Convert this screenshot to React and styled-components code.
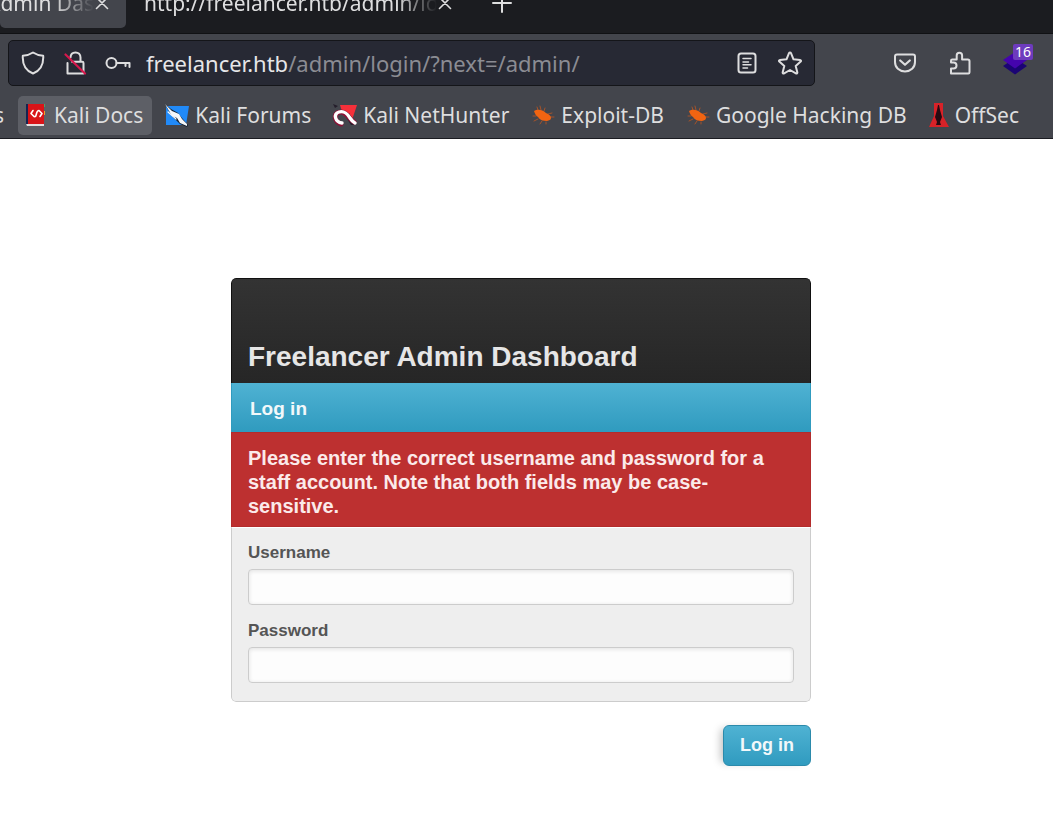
import React from "react";
import styled, { createGlobalStyle } from "styled-components";

const GlobalStyle = createGlobalStyle`
  *, *::before, *::after { box-sizing: border-box; }
  body {
    margin: 0;
    background: #fff;
    font-family: "Liberation Sans", Arial, sans-serif;
  }
  button, input { font-family: inherit; }
`;

const Browser = styled.header`
  font-family: "Noto Sans", sans-serif;
  color: #dededf;
  background: #43454c;
  border-bottom: 1px solid #1b1c22;
  overflow: hidden;
`;

const TabStrip = styled.nav`
  display: flex;
  align-items: flex-end;
  height: 34px;
  overflow: hidden;
  background: #1b1c20;
  border-bottom: 1px solid #101114;
`;

const Tab = styled.div`
  flex: none;
  display: flex;
  align-items: center;
  justify-content: flex-end;
  gap: 1px;
  width: ${(p) => p.$width}px;
  height: 50px;
  margin-bottom: 5px;
  padding-right: ${(p) => (p.$active ? 17 : 0)}px;
  border-radius: 5px;
  background: ${(p) => (p.$active ? "#43454c" : "transparent")};
`;

const TabLabel = styled.span`
  display: flex;
  justify-content: ${(p) => (p.$end ? "flex-end" : "flex-start")};
  width: ${(p) => p.$width}px;
  overflow: hidden;
  white-space: nowrap;
  font-size: 21px;
  line-height: 30px;
  mask-image: linear-gradient(to left, transparent 0, #000 40px);
`;

const IconButton = styled.button`
  display: flex;
  flex: none;
  align-items: center;
  justify-content: center;
  padding: 0;
  border: 0;
  color: inherit;
  background: none;
`;

const NewTab = styled(IconButton)`
  width: 20px;
  height: 50px;
  margin: 0 0 5px 40px;
`;

const Toolbar = styled.div`
  display: flex;
  align-items: center;
  padding: 6px 26px 3px 8px;
`;

const AddressBar = styled.div`
  flex: 1;
  display: flex;
  align-items: center;
  height: 46px;
  padding: 0 12px;
  background: #272934;
  border: 1px solid #141519;
  border-radius: 5px;
`;

const SiteIcons = styled.div`
  display: flex;
  gap: 18px;
  margin-right: 15px;
`;

const PageIcons = styled.div`
  display: flex;
  gap: 21px;
`;

const Address = styled.div`
  flex: 1;
  display: flex;
  min-width: 0;
  font-size: 22px;
  line-height: 30px;
  white-space: nowrap;
  color: #8b8c93;
`;

const Host = styled.span`
  color: #e6e6e8;
`;

const ToolbarActions = styled.div`
  display: flex;
  align-items: center;
  gap: 31px;
  margin-left: 78px;
`;

const Extension = styled(IconButton)`
  position: relative;
`;

const Badge = styled.span`
  position: absolute;
  top: -7px;
  right: -6px;
  padding: 0 2px;
  border-radius: 2px;
  background: #6d3bbd;
  color: #fff;
  font-size: 14px;
  line-height: 16px;
`;

const Bookmarks = styled.nav`
  display: flex;
  align-items: center;
  height: 49px;
  padding-top: 3px;
`;

const CutBookmark = styled.a`
  flex: none;
  display: flex;
  justify-content: flex-end;
  width: 4px;
  margin-right: 14px;
  overflow: hidden;
  color: inherit;
  font-size: 21px;
  line-height: 38px;
  text-decoration: none;
`;

const Bookmark = styled.a`
  flex: none;
  display: flex;
  align-items: center;
  gap: 5px;
  height: 39px;
  padding: 0 9px 0 7px;
  margin-right: 5px;
  border-radius: 5px;
  background: ${(p) => (p.$active ? "#5d5f66" : "transparent")};
  color: inherit;
  font-size: 21px;
  line-height: 30px;
  text-decoration: none;
  white-space: nowrap;
`;

const Page = styled.main`
  display: flex;
  justify-content: center;
  padding: 139px 11px 60px 0;
`;

const LoginForm = styled.form`
  width: 580px;
  max-width: 100%;
`;

const Card = styled.section`
  border-radius: 5px;
  overflow: hidden;
`;

const Title = styled.h1`
  margin: 0;
  padding: 61px 16px 9px;
  border: 1px solid #111;
  border-bottom: 0;
  border-radius: 5px 5px 0 0;
  background: linear-gradient(#333, #262626);
  color: #e6e6e6;
  font-size: 28px;
  line-height: 34px;
`;

const Heading = styled.h2`
  margin: 0;
  padding: 14px 18px 10px;
  border: 1px solid #309bbf;
  border-top: 0;
  background: linear-gradient(#4fb2d3, #309bbf);
  color: #f2f8fa;
  font-size: 19px;
  line-height: 24px;
`;

const ErrorNote = styled.p`
  margin: 0;
  padding: 13px 34px 8px 16px;
  border: 1px solid #b32c2c;
  background: #bd3030;
  color: #fbeaea;
  font-size: 20px;
  font-weight: bold;
  line-height: 24px;
`;

const Fields = styled.div`
  display: grid;
  gap: 14px;
  padding: 13px 16px 18px;
  border: 1px solid #ccc;
  border-top-color: #fff;
  border-radius: 0 0 5px 5px;
  background: #eee;
`;

const Field = styled.div`
  display: grid;
  gap: 4px;
`;

const Label = styled.label`
  color: #555;
  font-size: 17px;
  font-weight: bold;
  line-height: 24px;
`;

const Input = styled.input`
  width: 100%;
  height: 36px;
  padding: 0 8px;
  border: 1px solid #ccc;
  border-radius: 4px;
  background: #fdfdfd;
  box-shadow: inset 0 1px 4px #e0e0e0;
  font-size: 16px;
`;

const Actions = styled.div`
  display: flex;
  justify-content: flex-end;
  padding-top: 23px;
`;

const Submit = styled.button`
  height: 41px;
  padding: 0 16px;
  border: 1px solid #2b8aab;
  border-radius: 6px;
  background: linear-gradient(#4fb2d3, #309bbf);
  box-shadow: -6px 0 8px -4px #bbb;
  color: #f2f8fa;
  font-size: 18px;
  font-weight: bold;
`;

const Svg = ({ w = 24, h = 24, children, ...rest }) => (
  <svg
    width={w}
    height={h}
    viewBox={`0 0 ${w} ${h}`}
    fill="none"
    stroke="currentColor"
    strokeWidth="2"
    strokeLinecap="round"
    strokeLinejoin="round"
    aria-hidden="true"
    {...rest}
  >
    {children}
  </svg>
);

const CloseIcon = () => (
  <Svg w={14} h={14} strokeWidth="1.6"><path d="M1.5 1.5l11 11M12.500 1.500l-11 11" /></Svg>
);
const PlusIcon = () => (
  <Svg w={20} h={20}><path d="M10 1v18M1 10h18" /></Svg>
);
const ShieldIcon = () => (
  <Svg><path d="M12 1.500C9 3.500 5.500 4.600 1.800 4.700c-.5 8.300 2 14.800 10.200 17.800 8.200-3 10.700-9.500 10.200-17.800C18.500 4.600 15 3.500 12 1.500z" /></Svg>
);
const LockIcon = () => (
  <Svg>
    <path d="M4.500 12v10.500h16V12c0-.8-.5-1.300-1.300-1.300H9M7.500 6.500C7.600 3.500 9.600 1.400 12.500 1.400s5 2.100 5 5v4" />
    <path d="M2.500 3.500l19.500 19" stroke="#d6174c" strokeWidth="2.200" />
  </Svg>
);
const KeyIcon = () => (
  <Svg w={26}><circle cx="6.500" cy="12" r="5" /><path d="M11.500 12H24.500v4M20.500 12v3" /></Svg>
);
const ReaderIcon = () => (
  <Svg w={20}><rect x="1.500" y="2.500" width="17" height="19" rx="2.500" /><path d="M6 7.500h8M6 11h5.500M6 13.800h8M6 17h4.500" strokeWidth="1.500" /></Svg>
);
const StarIcon = () => (
  <Svg><path d="M12 1.500c.5 0 .8.300 1 .700l2.500 6.100 6.600.6c.9.100 1.200 1 .6 1.600l-5 4.400 1.600 6.400c.200.900-.6 1.500-1.400 1L12 19l-5.900 3.300c-.8.500-1.600-.1-1.400-1l1.600-6.400-5-4.400c-.6-.6-.3-1.500.6-1.600l6.600-.6L11 2.200c.2-.4.500-.7 1-.7z" /></Svg>
);
const PocketIcon = () => (
  <Svg><path d="M4 3.500h16c1.200 0 2 .8 2 2v5.500c0 5.500-4.300 9.500-10 9.500S2 16.500 2 11V5.500c0-1.200.8-2 2-2z" /><path d="M7.200 9.500L12 13.800l4.800-4.300" strokeWidth="2.200" /></Svg>
);
const PuzzleIcon = () => (
  <Svg><path d="M3 11.500V9.800c0-.9.400-1.300 1.300-1.300H8.700V4.500a2.700 2.700 0 015.400 0v4h5.700c1 0 1.700.7 1.700 1.700v11.100c0 .8-.4 1.200-1.200 1.200H3v-5h2.500a3 3 0 000-6H3z" /></Svg>
);
const LayersIcon = () => (
  <Svg stroke="none"><path d="M12 7l12 8-12 8.500L0 15z" fill="#1b0474" /><path d="M12 1l12 8-12 8.500L0 9z" fill="#4504ad" /></Svg>
);
const BookIcon = () => (
  <Svg stroke="none">
    <path d="M1 1h2v21H1z" fill="#152451" />
    <path d="M3 1h16v20H3z" fill="#d91418" />
    <path d="M19 1h1v3h-1z" fill="#45a46a" /><path d="M19 8h1v4h-1z" fill="#efa22b" />
    <path d="M1 21h18v2H2z" fill="#e4dede" />
    <path d="M8 7.500l-2 3 3 3M15 13.500l2-3-3-3M9 13.500c2 .5 2-1 2.500-3s1-3 2.500-3" stroke="#fff" strokeWidth="1.600" />
  </Svg>
);
const ForumIcon = () => (
  <Svg w={26} stroke="none">
    <path d="M2 3h23l-3 19H2z" fill="#218af8" />
    <path d="M1 1l6 5 7 4 4 5 6 7-1 2-7-3-7-7-3-4-3-5z" fill="#14202f" />
    <path d="M1 1l7 7 7 3 3 5 5 5v2l-7-3-3-5-5-2z" fill="#f5f7fa" />
    <path d="M4 9l8 7M8 10l5 2" stroke="#f5f7fa" strokeWidth="1.200" />
  </Svg>
);
const HunterIcon = () => (
  <Svg w={26} stroke="none">
    <path d="M8 2h17l-5 15-9-5z" fill="#f5303a" />
    <path d="M1 1l5 2-3 2zM17 10l7 12h-5l-5-8z" fill="#241e2b" />
    <path d="M9 21c-7-3-8-11-1-12 6-1 8 6 14 10" stroke="#8b1237" strokeWidth="5" />
    <path d="M10 20c-7-1-9-9-3-11 6-2 9 3 11 6s3 4 5 5" stroke="#fff" strokeWidth="3.400" />
  </Svg>
);
const BugIcon = () => (
  <Svg w={26} stroke="#a5532a" strokeWidth="1">
    <path d="M8 7L7 4M11 7l-1-4M14 8l1-3M18 11l4-1M20 14h4M6 13H3M8 16l-4 2M12 18l-2 3M16 19v2" />
    <path d="M4 8c3-2 8-2 12 2 3 1 5 3 5 5 0 2-2 2-4 3-4 0-7-1-9-4-2-1-3-3-4-6z" fill="#f26411" stroke="none" />
  </Svg>
);
const OffSecIcon = () => (
  <Svg w={22} h={26} stroke="none">
    <path d="M6 1h9v13l6 11H1l5-11z" fill="#d72228" />
    <path d="M10 3h1l1 5 2 7-2 5 1 3H8l1-3-2-5 2-7z" fill="#260b12" />
  </Svg>
);

const bookmarks = [
  { label: "Kali Docs", Icon: BookIcon, active: true },
  { label: "Kali Forums", Icon: ForumIcon },
  { label: "Kali NetHunter", Icon: HunterIcon },
  { label: "Exploit-DB", Icon: BugIcon },
  { label: "Google Hacking DB", Icon: BugIcon },
  { label: "OffSec", Icon: OffSecIcon },
];

export default function App() {
  return (
    <>
      <GlobalStyle />
      <Browser>
        <TabStrip aria-label="Tabs">
          <Tab $active $width={126}>
            <TabLabel $end $width={94}>Admin Das</TabLabel>
            <IconButton aria-label="Close tab"><CloseIcon /></IconButton>
          </Tab>
          <Tab $width={326}>
            <TabLabel $width={293}>http://freelancer.htb/admin/lo</TabLabel>
            <IconButton aria-label="Close tab"><CloseIcon /></IconButton>
          </Tab>
          <NewTab aria-label="New tab"><PlusIcon /></NewTab>
        </TabStrip>
        <Toolbar>
          <AddressBar>
            <SiteIcons>
              <IconButton aria-label="Tracking protection"><ShieldIcon /></IconButton>
              <IconButton aria-label="Connection not secure"><LockIcon /></IconButton>
              <IconButton aria-label="Saved logins"><KeyIcon /></IconButton>
            </SiteIcons>
            <Address><Host>freelancer.htb</Host>/admin/login/?next=/admin/</Address>
            <PageIcons>
              <IconButton aria-label="Reader view"><ReaderIcon /></IconButton>
              <IconButton aria-label="Bookmark this page"><StarIcon /></IconButton>
            </PageIcons>
          </AddressBar>
          <ToolbarActions>
            <IconButton aria-label="Save to Pocket"><PocketIcon /></IconButton>
            <IconButton aria-label="Extensions"><PuzzleIcon /></IconButton>
            <Extension aria-label="Layers extension"><LayersIcon /><Badge>16</Badge></Extension>
          </ToolbarActions>
        </Toolbar>
        <Bookmarks aria-label="Bookmarks">
          <CutBookmark href="#tools">s</CutBookmark>
          {bookmarks.map(({ label, Icon, active }) => (
            <Bookmark key={label} href="#bookmark" $active={active}><Icon />{label}</Bookmark>
          ))}
        </Bookmarks>
      </Browser>
      <Page>
        <LoginForm onSubmit={(e) => e.preventDefault()}>
          <Card>
            <Title>Freelancer Admin Dashboard</Title>
            <Heading>Log in</Heading>
            <ErrorNote>
              Please enter the correct username and password for a staff account. Note that both fields may be case-sensitive.
            </ErrorNote>
            <Fields>
              <Field>
                <Label htmlFor="username">Username</Label>
                <Input id="username" type="text" />
              </Field>
              <Field>
                <Label htmlFor="password">Password</Label>
                <Input id="password" type="password" />
              </Field>
            </Fields>
          </Card>
          <Actions><Submit type="submit">Log in</Submit></Actions>
        </LoginForm>
      </Page>
    </>
  );
}
